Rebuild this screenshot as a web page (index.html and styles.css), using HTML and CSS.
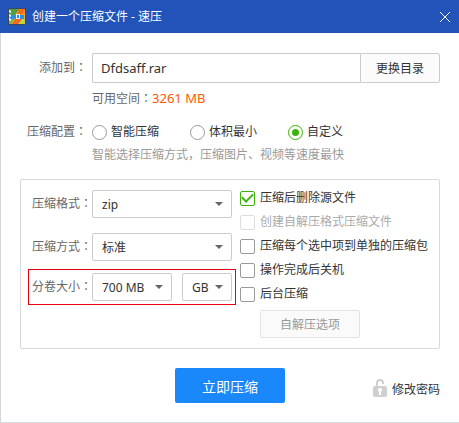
FILE: index.html
```html
<!DOCTYPE html>
<html lang="zh-CN">

<head>
    <meta charset="UTF-8">
    <meta name="viewport" content="width=device-width, initial-scale=1.0">
    <title>创建一个压缩文件 - 速压</title>
    <link rel="stylesheet" href="styles.css">
</head>

<body>
    <header class="titlebar">
        <svg class="logo" viewBox="0 0 18 18" aria-hidden="true">
            <rect x="0" y="0" width="18" height="17" rx="2" fill="#3a4a5c" />
            <rect x="1" y="1" width="16" height="15" rx="1" fill="#f5a623" />
            <path d="M1 1h10L7 7H1z" fill="#4f9e3f" />
            <path d="M1 10h6l-4 6H1z" fill="#7ab648" />
            <path d="M11 1h6v4l-7 3z" fill="#f58a1f" />
            <path d="M12 11h5v5H9z" fill="#c9d13c" />
            <path d="M2 7h14v4H2z" fill="#2f8fe0" />
            <path d="M10 2l4-1h3L14 6l-5 1z" fill="#f26a21" />
            <path d="M7 11h7l-4 5H4z" fill="#f26a21" />
            <rect x="8" y="6" width="4" height="5" fill="#e4f3ff" />
            <rect x="9" y="7" width="2" height="3" fill="#2f8fe0" />
            <path d="M1 2l2 1v2L1 4zM1 6l2 1v2L1 8zM1 10l2 1v2l-2-1z" fill="#fff" />
        </svg>
        <h1 class="title">创建一个压缩文件 - 速压</h1>
        <button class="close" type="button" aria-label="关闭">
            <svg viewBox="0 0 10 10" aria-hidden="true">
                <path d="M0 0l10 10M10 0L0 10" stroke="#fff" fill="none" />
            </svg>
        </button>
    </header>

    <form class="content">
        <div class="row">
            <label class="label" for="path">添加到<span class="colon">：</span></label>
            <input class="path" id="path" type="text" value="Dfdsaff.rar">
            <button class="browse" type="button">更换目录</button>
        </div>
        <p class="space">可用空间<span class="colon">：</span><span class="size">3261 MB</span></p>

        <div class="row config" role="radiogroup" aria-labelledby="config-label">
            <span class="label" id="config-label">压缩配置<span class="colon">：</span></span>
            <label class="choice"><input type="radio" name="config">智能压缩</label>
            <label class="choice"><input type="radio" name="config">体积最小</label>
            <label class="choice"><input type="radio" name="config" checked>自定义</label>
        </div>
        <p class="hint">智能选择压缩方式，压缩图片、视频等速度最快</p>

        <div class="panel">
            <div class="fields">
                <div class="field">
                    <label for="format">压缩格式<span class="colon">：</span></label>
                    <div class="select wide">
                        <select id="format">
                            <option>zip</option>
                        </select>
                    </div>
                </div>
                <div class="field">
                    <label for="method">压缩方式<span class="colon">：</span></label>
                    <div class="select wide">
                        <select id="method">
                            <option>标准</option>
                        </select>
                    </div>
                </div>
                <div class="field marked">
                    <label for="volume">分卷大小<span class="colon">：</span></label>
                    <div class="select volume">
                        <select id="volume">
                            <option>700 MB</option>
                        </select>
                    </div>
                    <div class="select unit">
                        <select aria-label="单位">
                            <option>GB</option>
                        </select>
                    </div>
                </div>
            </div>

            <div class="options">
                <label class="check"><input type="checkbox" checked>压缩后删除源文件</label>
                <label class="check disabled"><input type="checkbox" disabled>创建自解压格式压缩文件</label>
                <label class="check"><input type="checkbox">压缩每个选中项到单独的压缩包</label>
                <label class="check"><input type="checkbox">操作完成后关机</label>
                <label class="check"><input type="checkbox">后台压缩</label>
                <button class="sfx" type="button" disabled>自解压选项</button>
            </div>
        </div>

        <div class="actions">
            <button class="submit" type="submit">立即压缩</button>
            <a class="password" href="#">
                <svg class="lock" viewBox="0 0 14 18" aria-hidden="true">
                    <path d="M4 9V4a3 3 0 0 1 6 0v1" fill="none" stroke="#cfcfcf" stroke-width="2" />
                    <rect x="0" y="7" width="14" height="11" rx="2" fill="#cfcfcf" />
                    <circle cx="7" cy="11" r="2" fill="#fff" />
                    <rect x="6" y="11" width="2" height="5" fill="#fff" />
                </svg>
                修改密码
            </a>
        </div>
    </form>
</body>

</html>
```
FILE: styles.css
```css
* {
    box-sizing: border-box;
}

body {
    display: flex;
    flex-direction: column;
    min-height: 100vh;
    margin: 0;
    background-color: #fff;
    color: #333;
    font-family: "Noto Sans", "Noto Sans CJK SC", sans-serif;
    font-size: 12px;
    line-height: 18px;
}

button,
input,
select {
    margin: 0;
    color: inherit;
    font-family: inherit;
    font-size: 12px;
}

/* Title bar */
.titlebar {
    display: flex;
    align-items: center;
    height: 33px;
    padding: 0 9px 0 8px;
    background-color: #2153b8;
    color: #fff;
}

.logo {
    width: 18px;
    height: 18px;
    margin-right: 6px;
}

.title {
    flex: 1;
    margin: 0;
    font-size: 12px;
    font-weight: normal;
}

.close {
    display: flex;
    padding: 0;
    border: 0;
    background: none;
}

.close svg {
    width: 10px;
    height: 10px;
}

/* Form */
.content {
    flex: 1;
    padding: 20px 19px 16px;
    border-left: 1px solid #d5d8dc;
    border-bottom: 1px solid #d5dadc;
}

.row {
    display: flex;
    align-items: center;
}

.label {
    width: 67px;
    margin-right: 5px;
    text-align: right;
    white-space: nowrap;
}

.label,
.space,
.field label {
    color: #666;
}

/* the colon sits in the middle of its box */
.colon {
    font-family: "Noto Sans CJK JP", sans-serif;
    font-feature-settings: "locl" 0;
    line-height: 1;
}

.path {
    flex: 1;
    min-width: 0;
    height: 30px;
    padding: 0 8px;
    border: 1px solid #ccc;
    border-right: 0;
    border-radius: 2px 0 0 2px;
    font-size: 13px;
}

.browse {
    width: 80px;
    height: 30px;
    padding: 0;
    border: 1px solid #ccc;
    border-radius: 0 2px 2px 0;
    background-color: #fbfbfb;
}

.space,
.hint {
    margin: 0 0 0 72px;
}

.space {
    margin-top: 7px;
}

.size {
    color: #ff5a00;
    font-size: 13px;
    line-height: 1;
}

.config {
    margin-top: 15px;
}

.choice {
    display: flex;
    align-items: center;
    width: 98px;
}

.hint {
    margin-top: 5px;
    color: #999;
}

input[type="radio"],
input[type="checkbox"] {
    display: grid;
    place-items: center;
    flex: none;
    width: 15px;
    height: 15px;
    border: 1px solid #999;
    border-radius: 2px;
    background-color: #fff;
    appearance: none;
}

input[type="radio"] {
    margin-right: 4px;
    border-radius: 50%;
}

input[type="checkbox"] {
    margin-right: 5px;
}

input[type="radio"]:checked,
input[type="checkbox"]:checked {
    border-color: #3cb30a;
}

input[type="radio"]:checked::before {
    content: "";
    width: 7px;
    height: 7px;
    border-radius: 50%;
    background-color: #3cb30a;
}

input[type="checkbox"]:checked::before {
    content: "";
    width: 9px;
    height: 5px;
    margin-bottom: 3px;
    border: solid #3cb30a;
    border-width: 0 0 2px 2px;
    transform: rotate(-45deg);
}

/* Custom settings */
.panel {
    display: flex;
    gap: 4px;
    margin-top: 15px;
    padding: 6px 7px 10px;
    border: 1px solid #d9d9d9;
    border-radius: 2px;
}

.fields {
    flex: none;
}

.field {
    display: flex;
    align-items: center;
    margin-bottom: 7px;
    padding: 3px;
    border: 1px solid transparent;
}

.field label {
    flex: none;
    width: 60px;
    white-space: nowrap;
}

.marked {
    margin-top: -3px;
    border-color: #e60012;
}

.select {
    position: relative;
}

.select::after {
    content: "";
    position: absolute;
    top: 12px;
    right: 9px;
    border: 4px solid transparent;
    border-top-color: #666;
    border-bottom: 0;
    pointer-events: none;
}

.select select {
    display: block;
    width: 100%;
    height: 28px;
    padding: 0 9px;
    border: 1px solid #ccc;
    border-radius: 2px;
    background-color: #fff;
    appearance: none;
}

.wide {
    width: 140px;
}

.volume {
    width: 80px;
    margin-right: 10px;
}

.unit {
    width: 50px;
}

.check {
    display: flex;
    align-items: center;
    height: 24px;
    white-space: nowrap;
}

.disabled {
    color: #aaa;
}

.disabled input[type="checkbox"] {
    border-color: #ddd;
}

.sfx {
    display: block;
    width: 100px;
    height: 28px;
    margin: 4px 0 0 20px;
    padding: 0;
    border: 1px solid #e3e3e3;
    border-radius: 2px;
    background-color: #fafafa;
    color: #999;
}

/* Bottom buttons */
.actions {
    display: grid;
    grid-template-columns: 1fr auto 1fr;
    align-items: center;
    margin-top: 19px;
}

.submit {
    grid-column: 2;
    width: 110px;
    height: 35px;
    padding: 0;
    border: 0;
    border-radius: 2px;
    background-color: #1a87fb;
    color: #fff;
    font-size: 14px;
}

.password {
    display: flex;
    align-items: center;
    justify-self: end;
    gap: 5px;
    margin-top: 8px;
    color: #333;
    text-decoration: none;
}

.lock {
    width: 14px;
    height: 18px;
    margin-bottom: 4px;
}
```
